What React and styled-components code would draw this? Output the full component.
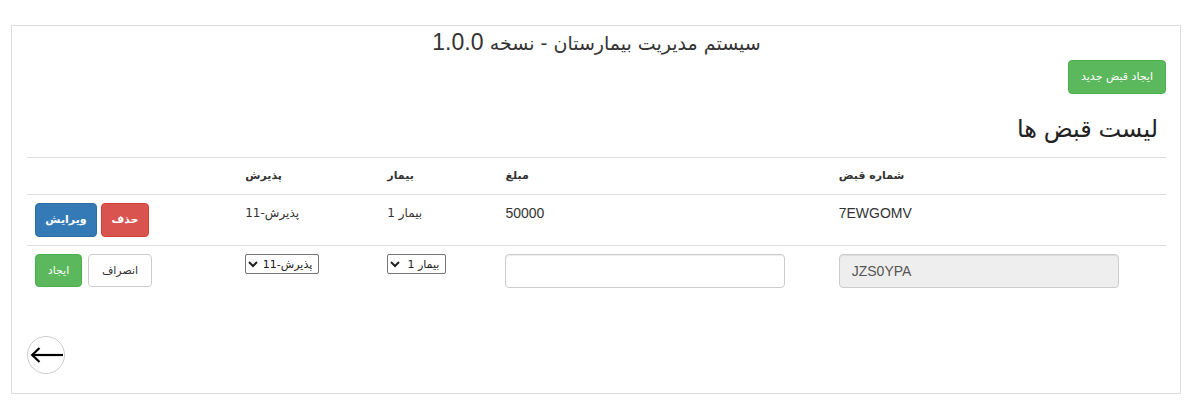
import styled, { createGlobalStyle } from "styled-components";

const GlobalStyle = createGlobalStyle`
    body {
        margin: 0;
        background: #fff;
        font-family: "Liberation Sans", "DejaVu Sans", sans-serif;
        font-size: 14px;
        color: #333;
    }
`;

const receipts = [
    { id: 1, code: '7EWGOMV', amount: '50000', patient: 'بیمار 1', admission: 'پذیرش-11' },
];

const App = () => {
    return (
        <>
            <GlobalStyle />
            <Panel dir="rtl">
                <Title><ArabicPart>سیستم مدیریت بیمارستان - نسخه</ArabicPart> 1.0.0</Title>
                <TopActions>
                    <Btn $variant="success" $w={98}>ایجاد قبض جدید</Btn>
                </TopActions>
                <Heading>لیست قبض ها</Heading>
                <Table>
                    <colgroup>
                        <col style={{ width: 335 }} />
                        <col style={{ width: 333 }} />
                        <col style={{ width: 118 }} />
                        <col style={{ width: 142 }} />
                        <col style={{ width: 210 }} />
                    </colgroup>
                    <thead>
                        <tr>
                            <Th>شماره قبض</Th>
                            <Th>مبلغ</Th>
                            <Th>بیمار</Th>
                            <Th>پذیرش</Th>
                            <Th></Th>
                        </tr>
                    </thead>
                    <tbody>
                        {receipts.map(r =>
                            <tr key={r.id}>
                                <Td><Latin>{r.code}</Latin></Td>
                                <Td><Latin>{r.amount}</Latin></Td>
                                <Td $small>{r.patient}</Td>
                                <Td $small>{r.admission}</Td>
                                <Td>
                                    <BtnGroup $gap={4}>
                                        <Btn $variant="danger" $w={48} $bold>حذف</Btn>
                                        <Btn $variant="primary" $w={62} $bold>ویرایش</Btn>
                                    </BtnGroup>
                                </Td>
                            </tr>
                        )}
                        <tr>
                            <Td>
                                <TextInput type="text" value="JZS0YPA" readOnly $ltr />
                            </Td>
                            <Td>
                                <TextInput type="text" defaultValue="" />
                            </Td>
                            <Td>
                                <Select $w={59} defaultValue="1">
                                    <option value="1">بیمار 1</option>
                                </Select>
                            </Td>
                            <Td>
                                <Select $w={74} defaultValue="11">
                                    <option value="11">پذیرش-11</option>
                                </Select>
                            </Td>
                            <Td>
                                <BtnGroup $gap={6}>
                                    <Btn $variant="default" $w={64} $h={33}>انصراف</Btn>
                                    <Btn $variant="success" $w={47} $h={33}>ایجاد</Btn>
                                </BtnGroup>
                            </Td>
                        </tr>
                    </tbody>
                </Table>
                <Footer>
                    <BackButton type="button">
                        <svg width="34" height="20" viewBox="0 0 34 20">
                            <path d="M2 10 H33" stroke="#000" strokeWidth="2.2" fill="none" />
                            <path d="M9.5 3 L2.2 10 L9.5 17" stroke="#000" strokeWidth="2.2" fill="none" strokeLinejoin="miter" />
                        </svg>
                    </BackButton>
                </Footer>
            </Panel>
        </>
    );
};

export default App;

const Panel = styled.div`
    margin: 25px 14px 0 11px;
    border: 1px solid #ddd;
    padding: 0 14px 19px 15px;
    min-height: 348px;
`;
const Title = styled.h3`
    margin: 3px 0 4px 0;
    text-align: center;
    font-size: 23px;
    line-height: 26px;
    font-weight: 400;
    color: #333;
`;
const ArabicPart = styled.span`
    font-family: "DejaVu Sans", sans-serif;
    font-size: 19px;
`;
const TopActions = styled.div`
    display: flex;
    justify-content: flex-start;
    height: 34px;
`;
const Heading = styled.h2`
    margin: 18px 8px 12px 0;
    font-size: 24px;
    line-height: 33px;
    font-weight: 400;
    color: #222;
`;
const variants = {
    success: { bg: '#5cb85c', border: '#4cae4c', color: '#fff' },
    danger: { bg: '#d9534f', border: '#d43f3a', color: '#fff' },
    primary: { bg: '#337ab7', border: '#2e6da4', color: '#fff' },
    default: { bg: '#fff', border: '#ccc', color: '#333' },
};
const Btn = styled.button`
    box-sizing: border-box;
    width: ${p => p.$w}px;
    height: ${p => p.$h || 34}px;
    padding: 0;
    background: ${p => variants[p.$variant].bg};
    border: 1px solid ${p => variants[p.$variant].border};
    color: ${p => variants[p.$variant].color};
    border-radius: 4px;
    font-family: "DejaVu Sans", sans-serif;
    font-size: 11px;
    font-weight: ${p => p.$bold ? 700 : 400};
    line-height: 20px;
    cursor: pointer;
    white-space: nowrap;
`;
const BtnGroup = styled.div`
    display: flex;
    justify-content: flex-end;
    gap: ${p => p.$gap}px;
`;
const Table = styled.table`
    width: 100%;
    table-layout: fixed;
    border-collapse: collapse;
    border-top: 1px solid #ddd;
`;
const Th = styled.th`
    padding: 8px;
    height: 20px;
    text-align: left;
    vertical-align: bottom;
    font-family: "DejaVu Sans", sans-serif;
    font-size: 11px;
    font-weight: 700;
    line-height: 20px;
    color: #333;
    border-bottom: 1px solid #ddd;
`;
const Td = styled.td`
    padding: 8px;
    text-align: left;
    vertical-align: top;
    line-height: 20px;
    font-family: ${p => p.$small ? '"DejaVu Sans", sans-serif' : 'inherit'};
    font-size: ${p => p.$small ? '12px' : '14px'};
    color: #333;
    tr:not(:last-child) > & {
        border-bottom: 1px solid #ddd;
    }
`;
const Latin = styled.span`
    font-family: "Liberation Sans", sans-serif;
    font-size: 14px;
`;
const TextInput = styled.input`
    box-sizing: border-box;
    width: 280px;
    height: 34px;
    padding: 6px 12px;
    border: 1px solid #ccc;
    border-radius: 4px;
    box-shadow: inset 0 1px 1px rgba(0,0,0,.075);
    background: ${p => p.readOnly ? '#eee' : '#fff'};
    color: #555;
    font-family: "Liberation Sans", sans-serif;
    font-size: 14px;
    direction: ${p => p.$ltr ? 'ltr' : 'rtl'};
    outline: none;
`;
const Select = styled.select`
    display: block;
    margin-right: auto;
    margin-left: 0;
    box-sizing: border-box;
    width: ${p => p.$w}px;
    height: 20px;
    border: 1px solid #767676;
    border-radius: 2px;
    background: #fff;
    color: #222;
    font-family: "DejaVu Sans", sans-serif;
    font-size: 11px;
    padding: 0 2px;
    direction: rtl;
`;
const Footer = styled.div`
    margin-top: 40px;
    display: flex;
    justify-content: flex-end;
`;
const BackButton = styled.button`
    box-sizing: border-box;
    width: 38px;
    height: 38px;
    border-radius: 50%;
    border: 1px solid #ccc;
    background: #fff;
    padding: 0;
    display: flex;
    align-items: center;
    justify-content: flex-start;
    overflow: visible;
    svg {
        margin-left: 1px;
    }
`;
